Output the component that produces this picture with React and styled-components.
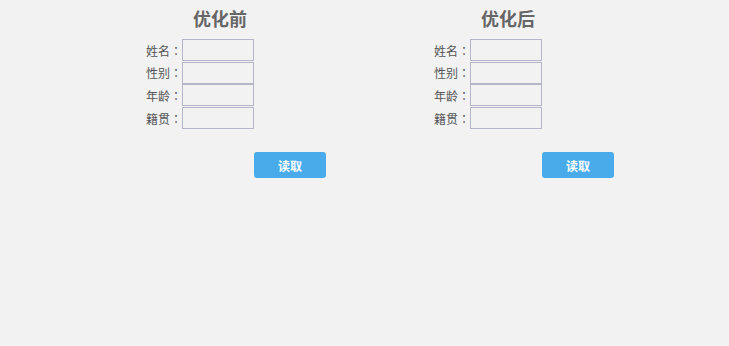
import React from "react";
import styled, { createGlobalStyle } from "styled-components";

const GlobalStyle = createGlobalStyle`
  html, body {
    margin: 0;
    padding: 0;
    background: #f2f2f2;
    font-family: "Noto Sans CJK SC", "Liberation Sans", sans-serif;
  }
`;

const fields = ["姓名", "性别", "年龄", "籍贯"];

function Panel({ title }) {
  return (
    <Column>
      <Title>{title}</Title>
      <Form>
        {fields.map((f) => (
          <Row key={f}>
            <Label>
              {f}
              <Colon>：</Colon>
            </Label>
            <Input />
          </Row>
        ))}
      </Form>
      <ReadButton>读取</ReadButton>
    </Column>
  );
}

export default function App() {
  return (
    <>
      <GlobalStyle />
      <Page>
        <Panel title="优化前" />
        <Panel title="优化后" />
      </Page>
    </>
  );
}

const Page = styled.div`
  display: flex;
  width: 577px;
  margin: 0 auto;
  height: 346px;
`;

const Column = styled.div`
  width: 288px;
  flex-shrink: 0;
  display: flex;
  flex-direction: column;
`;

const Title = styled.h2`
  margin: 0;
  height: 39px;
  line-height: 37px;
  font-size: 18px;
  font-weight: bold;
  color: #666;
  text-align: center;
`;

const Form = styled.div`
  display: flex;
  flex-direction: column;
  gap: 0.7px;
  padding-left: 70px;
`;

const Row = styled.div`
  display: flex;
  align-items: center;
  height: 22px;
`;

const Label = styled.span`
  width: 36px;
  flex-shrink: 0;
  white-space: nowrap;
  font-size: 12px;
  color: #555;
  text-align: right;
`;

const Colon = styled.span`
  font-family: "Noto Sans CJK TC", sans-serif;
`;

const Input = styled.input`
  box-sizing: border-box;
  flex-shrink: 0;
  width: 72px;
  height: 22px;
  margin: 0;
  padding: 0;
  border: 1px solid #b4b6c8;
  background: #f2f2f2;
  outline: none;
`;

const ReadButton = styled.button`
  margin: 23px 0 0 178px;
  width: 72px;
  height: 26px;
  border: none;
  border-radius: 3px;
  background: #4aabeb;
  color: #fff;
  font-family: inherit;
  font-size: 12px;
  font-weight: bold;
  cursor: pointer;
`;
